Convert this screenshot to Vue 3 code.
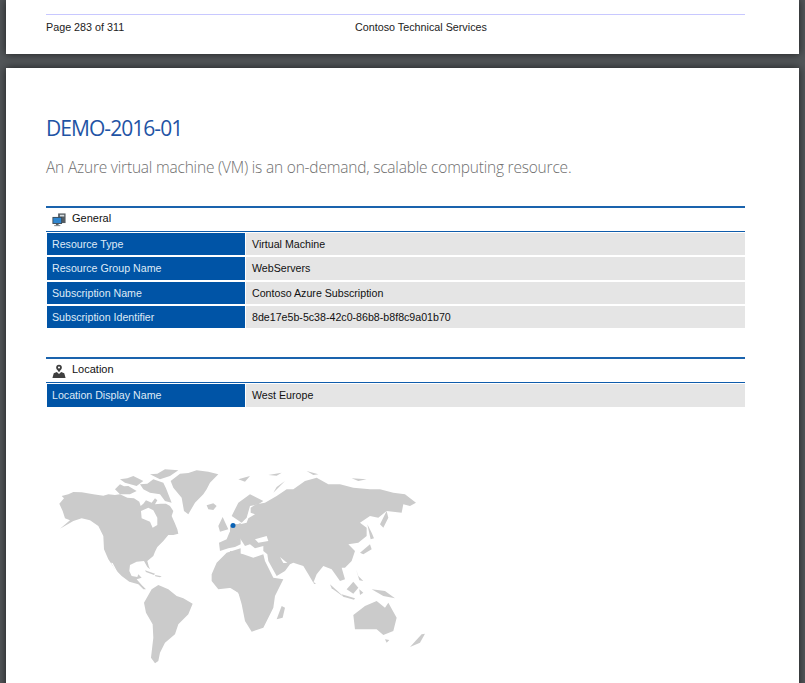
<script setup>
const generalRows = [
  ['Resource Type', 'Virtual Machine'],
  ['Resource Group Name', 'WebServers'],
  ['Subscription Name', 'Contoso Azure Subscription'],
  ['Subscription Identifier', '8de17e5b-5c38-42c0-86b8-b8f8c9a01b70']
]
const locationRows = [['Location Display Name', 'West Europe']]

// land shapes, western half of the map (3x units)
const westLand = [
  'M58,128 L72,112 L65,105 L85,100 L100,93 L125,94 L160,100 L190,104 L205,100 L225,102 L240,100 L262,110 L282,112 L298,122 L302,135 L310,128 L318,118 L335,125 L345,112 L352,118 L345,130 L362,128 L378,128 L390,135 L400,150 L395,165 L404,185 L412,205 L415,218 L400,222 L385,222 L370,240 L352,258 L345,272 L340,285 L322,300 L326,315 L330,325 L322,318 L312,300 L290,302 L270,312 L268,330 L275,345 L292,348 L295,340 L305,350 L290,355 L305,372 L318,385 L310,385 L295,370 L268,362 L245,345 L225,325 L205,295 L192,265 L190,225 L175,195 L150,178 L125,172 L100,180 L60,203 L90,178 L75,172 L68,150 Z',
  'M225,85 L240,70 L252,76 L265,75 L290,90 L270,100 L240,100 Z',
  'M240,55 L262,52 L280,45 L310,60 L290,75 L255,65 Z',
  'M300,70 L322,68 L340,55 L370,65 L378,82 L385,100 L395,125 L375,120 L360,100 L330,95 L310,85 Z',
  'M330,40 L352,38 L375,25 L415,28 L390,45 L360,55 Z',
  'M392,60 L420,38 L445,36 L470,28 L505,32 L535,40 L510,65 L500,85 L490,100 L465,125 L445,160 L432,150 L425,110 L400,80 Z',
  'M500,133 L520,127 L530,135 L520,147 L505,145 Z',
  'M535,195 L548,168 L558,190 L565,205 L540,212 Z',
  'M312,425 L335,385 L355,372 L385,385 L410,405 L430,412 L458,428 L445,460 L415,490 L405,520 L375,545 L360,575 L355,600 L345,607 L333,590 L340,530 L338,490 L318,455 Z',
  'M515,340 L530,305 L560,275 L602,262 L602,410 L595,395 L575,380 L535,385 L515,360 Z',
  'M537,245 L560,235 L568,215 L578,198 L602,185 L602,250 L585,258 L565,262 L540,270 Z',
  'M315,328 L345,338 L342,342 L318,333 Z',
  'M345,342 L365,346 L360,349 L346,346 Z'
]

// land shapes, eastern half of the map (3x units)
const eastLand = [
  'M0,250 L0,195 L8,188 L30,190 L50,185 L55,172 L75,160 L62,155 L62,140 L78,130 L105,125 L140,105 L170,85 L190,85 L225,60 L260,50 L295,70 L330,70 L370,80 L420,85 L450,85 L490,95 L525,100 L558,125 L540,135 L520,130 L515,155 L470,150 L445,170 L420,165 L390,185 L410,200 L410,225 L385,245 L355,250 L375,270 L365,300 L345,320 L335,320 L345,355 L330,360 L305,325 L280,315 L260,340 L250,365 L235,340 L220,315 L190,305 L180,310 L165,330 L140,345 L115,300 L112,280 L100,270 L100,255 L75,262 L60,250 L45,255 L30,232 Z',
  'M5,165 L25,125 L60,100 L100,120 L85,130 L60,135 L50,170 L35,185 Z',
  'M0,270 L40,280 L70,290 L100,280 L105,300 L130,350 L160,355 L135,405 L130,440 L115,470 L100,500 L65,512 L45,480 L35,430 L25,395 L0,380 Z',
  'M390,275 L420,250 L425,265 L400,280 Z',
  'M412,190 L422,235 L432,232 L425,215 Z',
  'M450,190 L470,150 L475,170 L460,200 Z',
  'M300,370 L345,410 L330,400 L305,382 Z',
  'M335,400 L375,412 L372,416 L340,407 Z',
  'M350,385 L370,362 L385,380 L370,398 Z',
  'M388,385 L400,395 L390,402 Z',
  'M378,325 L385,345 L400,360 L388,358 Z',
  'M425,385 L465,390 L495,412 L460,405 Z',
  'M370,462 L405,435 L440,420 L465,440 L475,425 L500,470 L490,510 L460,522 L440,505 L375,505 Z',
  'M465,535 L478,537 L470,545 Z',
  'M540,558 L575,520 L585,518 L570,545 Z',
  'M140,475 L155,435 L165,440 L158,470 Z',
  'M25,55 L60,45 L45,62 Z',
  'M115,42 L155,35 L140,44 Z',
  'M230,30 L265,40 L250,42 Z',
  'M365,52 L410,55 L385,60 Z',
  'M130,95 L165,60 L140,78 Z',
  'M250,362 L258,368 L252,369 Z'
]
</script>

<template>
  <div class="viewer">
    <section class="page page-prev">
      <footer class="page-foot">
        <span class="page-num">Page 283 of 311</span>
        <span class="page-title">Contoso Technical Services</span>
      </footer>
    </section>

    <section class="page page-main">
      <h1 class="title">DEMO-2016-01</h1>
      <p class="subtitle">An Azure virtual machine (VM) is an on-demand, scalable computing resource.</p>

      <div class="block">
        <div class="block-head">
          <svg class="icon" viewBox="0 0 16 16">
            <rect x="7" y="0.5" width="8.5" height="11" fill="#555c62" />
            <rect x="9" y="2" width="5" height="2" fill="#d8dde0" />
            <rect x="0.5" y="4.5" width="11" height="8" fill="#3c4850" />
            <rect x="1.5" y="5.5" width="9" height="6" fill="#2f86cf" />
            <rect x="4.5" y="12.5" width="3" height="1.5" fill="#566068" />
            <rect x="2.5" y="14" width="7" height="1" fill="#6b747a" />
          </svg>
          <span class="head-label">General</span>
        </div>
        <div v-for="row in generalRows" :key="row[0]" class="row">
          <div class="row-key">{{ row[0] }}</div>
          <div class="row-val">{{ row[1] }}</div>
        </div>
      </div>

      <div class="block block-location">
        <div class="block-head">
          <svg class="icon" viewBox="0 0 16 16">
            <circle cx="8" cy="4" r="3.2" fill="#3f3f3f" />
            <circle cx="8" cy="4" r="1.2" fill="#ffffff" />
            <path d="M8 9.5 L5.5 6 H10.5 Z" fill="#3f3f3f" />
            <path d="M0.5 16 L2 10.5 L5.5 9 L8 11.5 L10.5 9 L14 10.5 L15.5 16 Z" fill="#3f3f3f" />
          </svg>
          <span class="head-label">Location</span>
        </div>
        <div v-for="row in locationRows" :key="row[0]" class="row">
          <div class="row-key">{{ row[0] }}</div>
          <div class="row-val">{{ row[1] }}</div>
        </div>
      </div>

      <svg class="map" viewBox="46 460 400 212" width="400" height="212">
        <g transform="translate(40 460) scale(0.3333)" fill="#cbcbcb">
          <path v-for="(d, i) in westLand" :key="i" :d="d" />
          <path d="M303,150 L325,140 L340,148 L352,170 L352,192 L338,200 L330,182 L305,172 Z" fill="#fff" />
          <path d="M213,305 L218,306 L236,340 L232,340 Z" fill="#fff" />
        </g>
        <g transform="translate(230 460) scale(0.3333)" fill="#cbcbcb">
          <path v-for="(d, i) in eastLand" :key="i" :d="d" />
          <path d="M75,235 L110,225 L115,240 L85,245 Z" fill="#fff" />
          <path d="M150,288 L172,306 L160,306 Z" fill="#fff" />
        </g>
        <circle cx="233" cy="524.5" r="2.5" fill="#0a62b5" />
      </svg>
    </section>
  </div>
</template>

<style scoped>
.viewer {
  height: 683px;
  overflow: hidden;
  background: #525659;
  padding: 0 6px;
  box-sizing: border-box;
  font-family: "Liberation Sans", Arial, sans-serif;
}

.page {
  background: #fff;
  box-shadow: 0 0 8px rgba(0, 0, 0, 0.65);
}

.page-prev {
  height: 54px;
  padding: 14px 54px 0 40px;
  box-sizing: border-box;
}

.page-foot {
  display: flex;
  border-top: 1px solid #c8c8ff;
  padding-top: 6px;
  font-size: 10.75px;
  line-height: 13px;
  color: #222;
}

.page-num {
  width: 309px;
}

.page-main {
  margin-top: 14px;
  height: 640px;
  padding: 46px 54px 0 40px;
  box-sizing: border-box;
}

.title {
  margin: 0;
  font-family: "Open Sans", sans-serif;
  font-weight: 400;
  font-size: 21px;
  line-height: 28px;
  letter-spacing: -0.95px;
  color: #1f54a5;
}

.subtitle {
  margin: 14px 0 0;
  font-family: "Open Sans", sans-serif;
  font-weight: 300;
  font-size: 15.5px;
  line-height: 22px;
  letter-spacing: -0.2px;
  color: #6f6f6f;
}

.block {
  margin-top: 28px;
  font-size: 10.65px;
}

.block-location {
  margin-top: 28px;
}

.block-head {
  display: flex;
  align-items: center;
  gap: 6px;
  height: 23px;
  padding-left: 6px;
  border-top: 2px solid #1a63ad;
  border-bottom: 1px solid #0f5cab;
  font-size: 11px;
  color: #111;
}

.head-label {
  margin-bottom: 3px;
}

.icon {
  width: 14px;
  height: 14px;
}

.row {
  display: flex;
  gap: 1px;
  margin-top: 1px;
  height: 22.33px;
  padding-bottom: 1px;
}

.row-key {
  width: 193px;
  margin-left: 1px;
  padding-left: 5px;
  background: #0054a6;
  color: #dfeaf6;
  line-height: 22px;
}

.row-val {
  flex: 1;
  padding-left: 6px;
  background: #e5e5e5;
  color: #111;
  line-height: 22px;
}

.map {
  display: block;
  margin-top: 53px;
  filter: blur(0.45px);
}
</style>

<style>
body {
  margin: 0;
}
</style>
